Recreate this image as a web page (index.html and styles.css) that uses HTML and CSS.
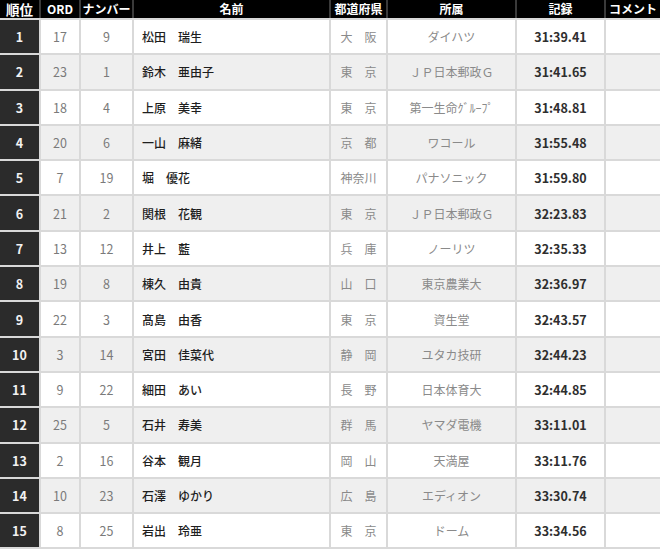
FILE: index.html
```html
<!DOCTYPE html>
<html lang="ja">
<head>
<meta charset="utf-8">
<link rel="stylesheet" href="styles.css">
</head>
<body>
<div class="table">
  <div class="row head">
    <div class="c wide">順位</div><div class="c">ORD</div><div class="c">ナンバー</div><div class="c">名前</div><div class="c">都道府県</div><div class="c">所属</div><div class="c">記録</div><div class="c">コメント</div>
  </div>
  <div class="row odd"><div class="c rank">1</div><div class="c num">17</div><div class="c num">9</div><div class="c name">松田　瑞生</div><div class="c pref">大　阪</div><div class="c team">ダイハツ</div><div class="c rec">31:39.41</div><div class="c"></div></div>
  <div class="row even"><div class="c rank">2</div><div class="c num">23</div><div class="c num">1</div><div class="c name">鈴木　亜由子</div><div class="c pref">東　京</div><div class="c team">ＪＰ日本郵政Ｇ</div><div class="c rec">31:41.65</div><div class="c"></div></div>
  <div class="row odd"><div class="c rank">3</div><div class="c num">18</div><div class="c num">4</div><div class="c name">上原　美幸</div><div class="c pref">東　京</div><div class="c team">第一生命ｸﾞﾙｰﾌﾟ</div><div class="c rec">31:48.81</div><div class="c"></div></div>
  <div class="row even"><div class="c rank">4</div><div class="c num">20</div><div class="c num">6</div><div class="c name">一山　麻緒</div><div class="c pref">京　都</div><div class="c team">ワコール</div><div class="c rec">31:55.48</div><div class="c"></div></div>
  <div class="row odd"><div class="c rank">5</div><div class="c num">7</div><div class="c num">19</div><div class="c name">堀　優花</div><div class="c pref">神奈川</div><div class="c team">パナソニック</div><div class="c rec">31:59.80</div><div class="c"></div></div>
  <div class="row even"><div class="c rank">6</div><div class="c num">21</div><div class="c num">2</div><div class="c name">関根　花観</div><div class="c pref">東　京</div><div class="c team">ＪＰ日本郵政Ｇ</div><div class="c rec">32:23.83</div><div class="c"></div></div>
  <div class="row odd"><div class="c rank">7</div><div class="c num">13</div><div class="c num">12</div><div class="c name">井上　藍</div><div class="c pref">兵　庫</div><div class="c team">ノーリツ</div><div class="c rec">32:35.33</div><div class="c"></div></div>
  <div class="row even"><div class="c rank">8</div><div class="c num">19</div><div class="c num">8</div><div class="c name">棟久　由貴</div><div class="c pref">山　口</div><div class="c team">東京農業大</div><div class="c rec">32:36.97</div><div class="c"></div></div>
  <div class="row odd"><div class="c rank">9</div><div class="c num">22</div><div class="c num">3</div><div class="c name">髙島　由香</div><div class="c pref">東　京</div><div class="c team">資生堂</div><div class="c rec">32:43.57</div><div class="c"></div></div>
  <div class="row even"><div class="c rank">10</div><div class="c num">3</div><div class="c num">14</div><div class="c name">宮田　佳菜代</div><div class="c pref">静　岡</div><div class="c team">ユタカ技研</div><div class="c rec">32:44.23</div><div class="c"></div></div>
  <div class="row odd"><div class="c rank">11</div><div class="c num">9</div><div class="c num">22</div><div class="c name">細田　あい</div><div class="c pref">長　野</div><div class="c team">日本体育大</div><div class="c rec">32:44.85</div><div class="c"></div></div>
  <div class="row even"><div class="c rank">12</div><div class="c num">25</div><div class="c num">5</div><div class="c name">石井　寿美</div><div class="c pref">群　馬</div><div class="c team">ヤマダ電機</div><div class="c rec">33:11.01</div><div class="c"></div></div>
  <div class="row odd"><div class="c rank">13</div><div class="c num">2</div><div class="c num">16</div><div class="c name">谷本　観月</div><div class="c pref">岡　山</div><div class="c team">天満屋</div><div class="c rec">33:11.76</div><div class="c"></div></div>
  <div class="row even"><div class="c rank">14</div><div class="c num">10</div><div class="c num">23</div><div class="c name">石澤　ゆかり</div><div class="c pref">広　島</div><div class="c team">エディオン</div><div class="c rec">33:30.74</div><div class="c"></div></div>
  <div class="row odd"><div class="c rank">15</div><div class="c num">8</div><div class="c num">25</div><div class="c name">岩出　玲亜</div><div class="c pref">東　京</div><div class="c team">ドーム</div><div class="c rec">33:34.56</div><div class="c"></div></div>
  <div class="row even"><div class="c rank"></div><div class="c num"></div><div class="c num"></div><div class="c name"></div><div class="c pref"></div><div class="c team"></div><div class="c rec"></div><div class="c"></div></div>
</div>
</body>
</html>
```
FILE: styles.css
```css
html, body {
  margin: 0;
  padding: 0;
  background: #ffffff;
  overflow: hidden;
  height: 549px;
}
body {
  font-family: "Noto Sans CJK JP", "Noto Sans", sans-serif;
  font-size: 12px;
}
.table {
  display: flex;
  flex-direction: column;
  gap: 2px;
  background: #d9d9d9;
  width: 660px;
}
.row {
  display: grid;
  grid-template-columns: 39px 38px 51px 195px 55px 127px 87px 54px;
  column-gap: 2px;
  height: 33.3px;
}
.row.head {
  height: 18px;
  background: #3a3a3a;
}
.c {
  display: flex;
  align-items: center;
  justify-content: center;
  white-space: nowrap;
  overflow: hidden;
}
.head .c {
  background: #000;
  color: #fff;
  font-weight: 700;
  font-size: 12px;
  line-height: 18px;
}
.head .c.wide {
  font-size: 13.5px;
}
.odd .c { background: #ffffff; }
.even .c { background: #efefef; }
.row .c.rank {
  background: #2b2b2b;
  color: #f2f2f2;
  font-weight: 700;
  font-size: 12.5px;
}
.num {
  color: #7a7a7a;
  font-size: 12.5px;
}
.name {
  justify-content: flex-start;
  padding-left: 8px;
  color: #1e1e1e;
  font-weight: 500;
  font-size: 12px;
}
.pref {
  color: #8a8a8a;
  font-size: 12px;
}
.team {
  color: #8a8a8a;
  font-size: 12px;
}
.rec {
  color: #2e2e2e;
  font-weight: 700;
  font-size: 12.5px;
}
```
